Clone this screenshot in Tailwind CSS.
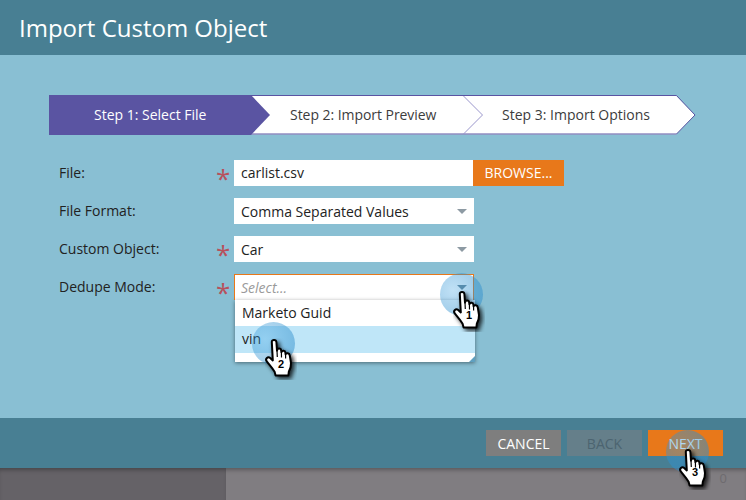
<!DOCTYPE html>
<html>
<head>
<meta charset="utf-8">
<script src="https://cdn.jsdelivr.net/npm/@tailwindcss/browser@4"></script>
</head>
<body class="m-0 w-[746px] h-[500px] overflow-hidden font-['Open_Sans',sans-serif]">
<svg width="0" height="0" class="absolute">
  <defs>
    <filter id="hs" x="-40%" y="-40%" width="190%" height="190%"><feDropShadow dx="2.5" dy="2.5" stdDeviation="2" flood-color="#000" flood-opacity="0.8"/></filter>
    <symbol id="hand" viewBox="0 0 32 42">
      <path filter="url(#hs)" d="M6.8 4C6.6 1.4 11.2 1.2 11.4 4L12 12.6C12.2 9.8 16 9.8 16.2 12.6L16.4 14.2C16.8 12 20.2 12.2 20.4 14.6L20.6 16.4C21 14.6 24.6 15 24.8 17.6L26 25C26.2 29 25 31.6 23.8 33.8L23.4 37.4H10.6L9.6 33.8C7.4 30 4.4 27 1.6 23.2C0 20.8 2.8 18 5.2 20L7.8 22.4Z" fill="#fff" stroke="#000" stroke-width="2" stroke-linejoin="round"/>
      <path d="M12 12.6L12.3 19M16.4 14.2L16.5 19.5M20.6 16.4L20.6 20.5" stroke="#000" stroke-width="1.2" fill="none"/>
    </symbol>
  </defs>
</svg>

<div class="relative w-[746px] h-[500px] flex flex-col bg-[#89bfd3]">
  <header class="h-[55px] shrink-0 bg-[#487f93] flex items-center pl-[19px] text-white text-[24px] leading-none">Import Custom Object</header>

  <main class="h-[363px] shrink-0 pt-10 pl-[49px]">
    <div class="relative w-[647px] h-10">
      <svg class="absolute inset-0" width="647" height="40" viewBox="0 0 647 40">
        <path d="M0.5 0.5H627L646 20L627 39.5H0.5Z" fill="#fff"/>
        <path d="M202 .5H627.5L646 20L627.5 39H202" fill="none" stroke="#5a54a2" stroke-width="1"/>
        <path d="M414.5 1L433.5 20L414.5 39" fill="none" stroke="#9a96cc" stroke-width="1"/>
        <path d="M0 0H202L221 20L202 40H0Z" fill="#5a54a2"/>
      </svg>
      <ol class="relative flex h-10 items-center text-[14px] leading-none">
        <li class="w-[241px] pl-[45px] text-white">Step 1: Select File</li>
        <li class="w-[212px] text-[#3c3c3c] tracking-[-0.05px]">Step 2: Import Preview</li>
        <li class="text-[#3c3c3c]">Step 3: Import Options</li>
      </ol>
    </div>

    <form class="mt-[25px] pl-[10px] flex flex-col gap-3 text-[14px] text-[#222]">
      <div class="flex items-start h-[26px]">
        <label class="w-[156px] leading-[26px]">File:</label>
        <span class="w-[19px] pl-px text-[#b8505c] text-[26px] leading-[37px] h-[26px]">*</span>
        <div class="w-[239px] h-[26px] bg-white pl-[7px] leading-[26px]">carlist.csv</div>
        <button type="button" class="w-[91px] h-[26px] bg-[#e8781a] text-white text-center leading-[26px]">BROWSE...</button>
      </div>
      <div class="flex items-start h-[26px]">
        <label class="w-[175px] leading-[26px]">File Format:</label>
        <div class="w-[240px] h-[26px] bg-white pl-[7px] pr-[7px] flex items-center justify-between">Comma Separated Values<span class="w-0 h-0 border-x-[5px] border-x-transparent border-t-[5px] border-t-[#8d9aa3]"></span></div>
      </div>
      <div class="flex items-start h-[26px]">
        <label class="w-[156px] leading-[26px]">Custom Object:</label>
        <span class="w-[19px] pl-px text-[#b8505c] text-[26px] leading-[37px] h-[26px]">*</span>
        <div class="w-[240px] h-[26px] bg-white pl-[7px] pr-[7px] flex items-center justify-between">Car<span class="w-0 h-0 border-x-[5px] border-x-transparent border-t-[5px] border-t-[#8d9aa3]"></span></div>
      </div>
      <div class="relative flex items-start h-[26px]">
        <label class="w-[156px] leading-[26px]">Dedupe Mode:</label>
        <span class="w-[19px] pl-px text-[#b8505c] text-[26px] leading-[37px] h-[26px]">*</span>
        <div class="w-[240px] h-[26px] bg-white border border-[#e8781a] border-b-0 pl-[6px] pr-[6px] flex items-center justify-between italic text-[#9a9a9a]">Select...<span class="w-0 h-0 border-x-[5px] border-x-transparent border-t-[5px] border-t-[#6d8796]"></span></div>
        <ul class="absolute left-[176px] top-[26px] w-[240px] h-[62px] bg-white shadow-[0_1px_4px_rgba(0,0,0,0.45)] text-[#222]">
          <li class="h-[26px] pl-[7px] leading-[26px]">Marketo Guid</li>
          <li class="h-[27px] pl-[7px] leading-[26px] bg-[#bfe6f8]">vin</li>
          <span class="absolute right-0 bottom-0 w-0 h-0 border-l-[6px] border-l-transparent border-b-[6px] border-b-[#5fa0c0]"></span>
        </ul>
      </div>
    </form>
  </main>

  <footer class="h-[50px] shrink-0 bg-[#487f93] flex items-start justify-end gap-[6px] pt-3 pr-[23px] text-[14px]">
    <button type="button" class="w-[75px] h-[26px] bg-[#7e7e7e] text-white">CANCEL</button>
    <button type="button" class="w-[75px] h-[26px] bg-[#657f8a] text-[#4c6470]">BACK</button>
    <button type="button" class="w-[75px] h-[26px] bg-[#e8781a] text-white">NEXT</button>
  </footer>

  <div class="flex-1 flex bg-[#807d81] shadow-[inset_0_4px_4px_-2px_rgba(0,0,0,0.3)]">
    <div class="w-[226px] bg-[#656267] shadow-[inset_0_4px_4px_-2px_rgba(0,0,0,0.3)]"></div>
    <div class="flex-1 flex justify-end items-end pr-[19px] pb-[15px] text-[13px] leading-none text-[#6e6b6f]">0</div>
  </div>

  <!-- callout annotations -->
  <span class="absolute left-[440px] top-[273px] w-[43px] h-[43px] rounded-full bg-[radial-gradient(circle_at_30%_40%,rgba(47,155,224,0.3),rgba(47,140,200,0.55))]"></span>
  <svg class="absolute left-[453px] top-[290px]" width="32" height="42"><use href="#hand"/></svg>
  <span class="absolute left-[464px] top-[310px] w-[10px] text-center font-['Liberation_Sans',sans-serif] font-bold text-[11px] leading-none text-black">1</span>

  <span class="absolute left-[252px] top-[322px] w-[43px] h-[43px] rounded-full bg-[radial-gradient(circle_at_30%_40%,rgba(47,155,224,0.3),rgba(47,140,200,0.55))]"></span>
  <svg class="absolute left-[265px] top-[338px]" width="32" height="42"><use href="#hand"/></svg>
  <span class="absolute left-[276px] top-[359px] w-[10px] text-center font-['Liberation_Sans',sans-serif] font-bold text-[11px] leading-none text-black">2</span>

  <span class="absolute left-[666px] top-[430px] w-[43px] h-[43px] rounded-full bg-[radial-gradient(circle_at_30%_40%,rgba(47,155,224,0.35),rgba(47,140,200,0.6))]"></span>
  <svg class="absolute left-[679px] top-[448px]" width="32" height="42"><use href="#hand"/></svg>
  <span class="absolute left-[690px] top-[467px] w-[10px] text-center font-['Liberation_Sans',sans-serif] font-bold text-[11px] leading-none text-black">3</span>
</div>
</body>
</html>
